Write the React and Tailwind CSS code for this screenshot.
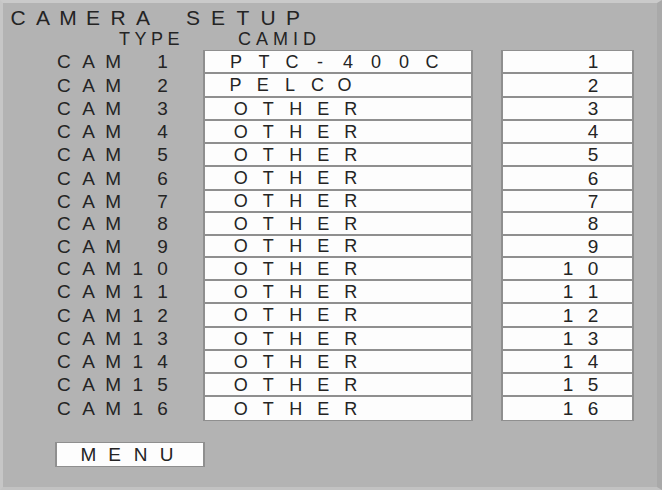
import React from 'react';

// One character per fixed-width cell, like an on-screen-display character grid.
function Cells({ text, cell }) {
  return text.split('').map((ch, i) => (
    <span key={i} className={`inline-block text-center ${cell}`}>
      {ch === ' ' ? '\u00a0' : ch}
    </span>
  ));
}

const rows = [
  { n: '1', type: 'PTC-400C', h: 'h-[23px]', pad: 'pl-[17px]', cell: 'w-[28px]' },
  { n: '2', type: 'PELCO', h: 'h-[24px]', pad: 'pl-[17px]', cell: 'w-[27.25px]' },
  { n: '3', type: 'OTHER', h: 'h-[23px]', pad: 'pl-[22px]', cell: 'w-[27.5px]' },
  { n: '4', type: 'OTHER', h: 'h-[23px]', pad: 'pl-[22px]', cell: 'w-[27.5px]' },
  { n: '5', type: 'OTHER', h: 'h-[23px]', pad: 'pl-[22px]', cell: 'w-[27.5px]' },
  { n: '6', type: 'OTHER', h: 'h-[24px]', pad: 'pl-[22px]', cell: 'w-[27.5px]' },
  { n: '7', type: 'OTHER', h: 'h-[22px]', pad: 'pl-[22px]', cell: 'w-[27.5px]' },
  { n: '8', type: 'OTHER', h: 'h-[23px]', pad: 'pl-[22px]', cell: 'w-[27.5px]' },
  { n: '9', type: 'OTHER', h: 'h-[22px]', pad: 'pl-[22px]', cell: 'w-[27.5px]' },
  { n: '10', type: 'OTHER', h: 'h-[23px]', pad: 'pl-[22px]', cell: 'w-[27.5px]' },
  { n: '11', type: 'OTHER', h: 'h-[23px]', pad: 'pl-[22px]', cell: 'w-[27.5px]' },
  { n: '12', type: 'OTHER', h: 'h-[24px]', pad: 'pl-[22px]', cell: 'w-[27.5px]' },
  { n: '13', type: 'OTHER', h: 'h-[23px]', pad: 'pl-[22px]', cell: 'w-[27.5px]' },
  { n: '14', type: 'OTHER', h: 'h-[23px]', pad: 'pl-[22px]', cell: 'w-[27.5px]' },
  { n: '15', type: 'OTHER', h: 'h-[23px]', pad: 'pl-[22px]', cell: 'w-[27.5px]' },
  { n: '16', type: 'OTHER', h: 'h-[25px]', pad: 'pl-[22px]', cell: 'w-[27.5px]' },
];

function CameraRow({ row }) {
  return (
    <div className={`flex ${row.h}`}>
      <div className="w-[200px] flex items-center pl-[48.5px] text-[19px] leading-none">
        <Cells text={'CAM' + row.n.padStart(2, ' ')} cell="w-[24.7px]" />
      </div>
      <div
        className={`w-[270px] flex items-center bg-[#fdfdfd] border-x-2 border-y border-[#8f8f8f] text-[18px] leading-none ${row.pad}`}
      >
        <Cells text={row.type} cell={row.cell} />
      </div>
      <div className="w-[28px]" />
      <div className="w-[133px] flex items-center justify-end pr-[26.5px] bg-[#fdfdfd] border-x-2 border-y border-[#8f8f8f] text-[19px] leading-none">
        <Cells text={row.n} cell="w-[25px]" />
      </div>
    </div>
  );
}

export default function App() {
  return (
    <div className="w-[662px] h-[490px] overflow-hidden bg-[#b3b3b3] text-[#242424] font-['Liberation_Sans',Arial,sans-serif] border-t-[3px] border-l-[3px] border-r-[5px] border-b-[3px] border-t-[#cacaca] border-l-[#c6c6c6] border-r-[#a9a9a9] border-b-[#c2c2c2] flex flex-col">
      <div className="pt-[4px] pl-[2.5px] text-[21px] leading-[21px] whitespace-nowrap">
        <Cells text="CAMERA SETUP" cell="w-[25px]" />
      </div>
      <div className="mt-[2px] flex text-[18px] leading-[18px]">
        <span className="ml-[116px] w-[119px] tracking-[4.5px]">TYPE</span>
        <span className="tracking-[5px]">CAMID</span>
      </div>
      <div className="mt-[2px] flex flex-col">
        {rows.map((r) => (
          <CameraRow key={r.n} row={r} />
        ))}
      </div>
      <div className="mt-[21px] ml-[52px] w-[150px] h-[25px] flex items-center pl-[18.5px] bg-[#fdfdfd] border-x-2 border-y border-[#8f8f8f] text-[19px] leading-none">
        <Cells text="MENU" cell="w-[26px]" />
      </div>
    </div>
  );
}
